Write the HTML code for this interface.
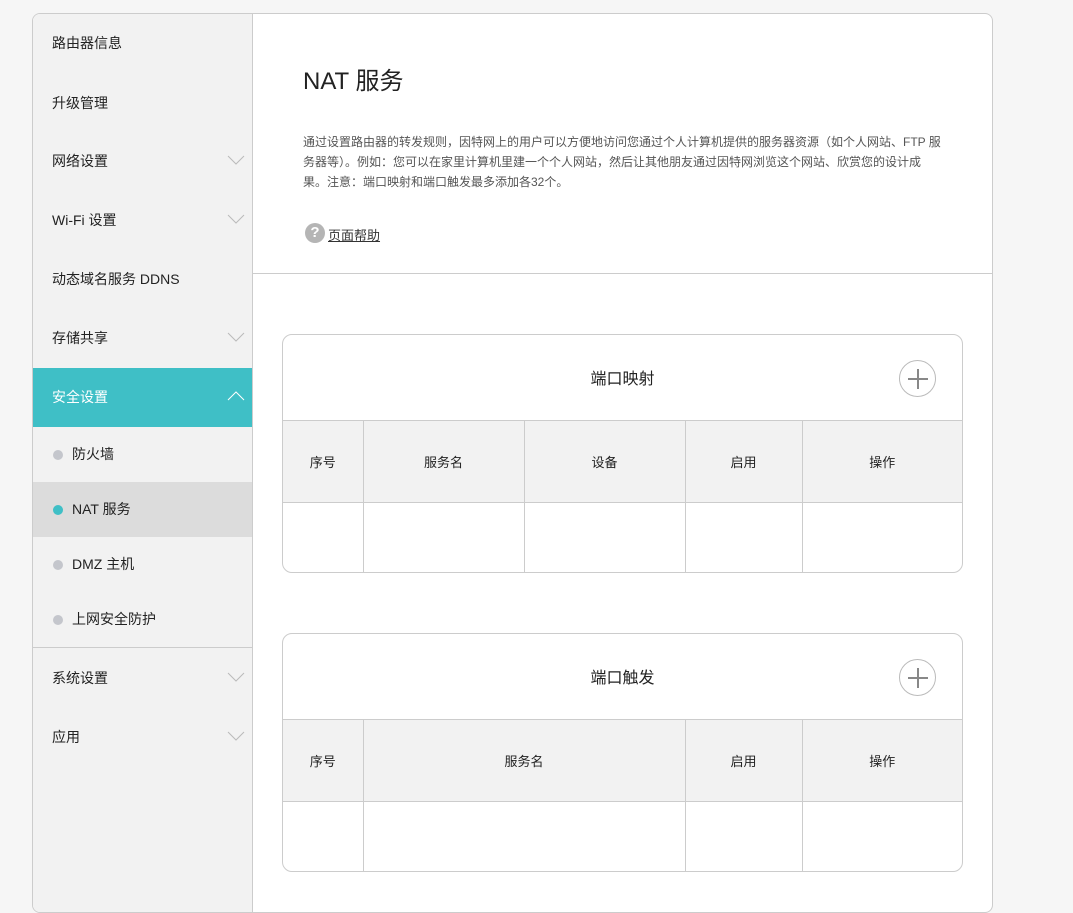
<!DOCTYPE html>
<html><head><meta charset="utf-8"><style>
*{margin:0;padding:0;box-sizing:border-box}
body{width:1073px;height:899px;background:#f6f6f6;font-family:"Liberation Sans","Noto Sans CJK SC",sans-serif;color:#222;position:relative;overflow:hidden}
.wrap{position:absolute;left:32px;top:13px;width:961px;height:900px;border:1px solid #ccc;border-radius:8px;background:#fff;overflow:hidden}
.side{position:absolute;left:0;top:0;width:220px;height:900px;background:#f2f2f2;border-right:1px solid #ccc}
.it{position:absolute;left:0;width:219px;height:59px;line-height:59px;padding-left:19px;font-size:14px;color:#222}
.it svg{position:absolute;right:7px;top:23px}
.act{background:#3fbfc6;color:#fff}
.sub{position:absolute;left:0;width:219px;height:55px;line-height:55px;padding-left:39px;font-size:14px}
.sub:before{content:"";position:absolute;left:20px;top:23px;width:10px;height:10px;border-radius:50%;background:#c4c6cc}
.sub.on{background:#dcdcdc}.sub.on:before{background:#3fbfc6}
.a{position:absolute;font-size:12px;color:#555}
.card{position:absolute;left:249px;width:681px;border:1px solid #ccc;border-radius:10px;overflow:hidden;background:#fff}
.ch{height:86px;line-height:90px;text-align:center;font-size:16px;border-bottom:1px solid #ccc;position:relative}
.plus{position:absolute;left:616px;top:25px;width:37px;height:37px;border:1px solid #bbb;border-radius:50%}
.plus:before{content:"";position:absolute;left:8px;top:17px;width:20px;height:2px;background:#888}
.plus:after{content:"";position:absolute;left:17px;top:8px;width:2px;height:20px;background:#888}
table{border-collapse:collapse;width:100%;table-layout:fixed}
td{border-right:1px solid #ccc;text-align:center;font-size:13px}
td:last-child{border-right:none}
tr.h td{height:81px;background:#f2f2f2;border-bottom:1px solid #ccc}
tr.b td{height:70px}
</style></head><body>
<div class="wrap">
<div class="side">
<div class="it" style="top:0">路由器信息</div>
<div class="it" style="top:60px">升级管理</div>
<div class="it" style="top:118px">网络设置<svg width="18" height="10"><path d="M1 1L9 9L17 1" fill="none" stroke="#bbb"/></svg></div>
<div class="it" style="top:177px">Wi-Fi 设置<svg width="18" height="10"><path d="M1 1L9 9L17 1" fill="none" stroke="#bbb"/></svg></div>
<div class="it" style="top:236px">动态域名服务 DDNS</div>
<div class="it" style="top:295px">存储共享<svg width="18" height="10"><path d="M1 1L9 9L17 1" fill="none" stroke="#bbb"/></svg></div>
<div class="it act" style="top:354px">安全设置<svg width="18" height="10"><path d="M1 9L9 1L17 9" fill="none" stroke="#fff"/></svg></div>
<div class="sub" style="top:413px">防火墙</div>
<div class="sub on" style="top:468px">NAT 服务</div>
<div class="sub" style="top:523px">DMZ 主机</div>
<div class="sub" style="top:578px">上网安全防护</div>
<div style="position:absolute;left:0;top:633px;width:219px;border-top:1px solid #ccc"></div>
<div class="it" style="top:635px">系统设置<svg width="18" height="10"><path d="M1 1L9 9L17 1" fill="none" stroke="#bbb"/></svg></div>
<div class="it" style="top:694px">应用<svg width="18" height="10"><path d="M1 1L9 9L17 1" fill="none" stroke="#bbb"/></svg></div>
</div>
<div class="a" style="left:270px;top:47px;font-size:24px;color:#222">NAT 服务</div>
<div class="a" style="left:270px;top:118px;width:640px;line-height:20px">通过设置路由器的转发规则，因特网上的用户可以方便地访问您通过个人计算机提供的服务器资源（如个人网站、FTP 服务器等）。例如：您可以在家里计算机里建一个个人网站，然后让其他朋友通过因特网浏览这个网站、欣赏您的设计成果。注意：端口映射和端口触发最多添加各32个。</div>
<div class="a" style="left:272px;top:209px;width:20px;height:20px;border-radius:50%;background:#b5b5b5;color:#fff;font-size:15px;font-weight:bold;text-align:center;line-height:20px">?</div>
<div class="a" style="left:295px;top:211px;font-size:13px;color:#333;text-decoration:underline">页面帮助</div>
<div style="position:absolute;left:220px;top:259px;width:741px;border-top:1px solid #ccc"></div>
<div class="card" style="top:320px;height:239px">
<div class="ch">端口映射<div class="plus"></div></div>
<table><colgroup><col style="width:80px"><col style="width:161px"><col style="width:161px"><col style="width:117px"><col></colgroup>
<tr class="h"><td>序号</td><td>服务名</td><td>设备</td><td>启用</td><td>操作</td></tr>
<tr class="b"><td></td><td></td><td></td><td></td><td></td></tr></table>
</div>
<div class="card" style="top:619px;height:239px">
<div class="ch">端口触发<div class="plus"></div></div>
<table><colgroup><col style="width:80px"><col style="width:322px"><col style="width:117px"><col></colgroup>
<tr class="h"><td>序号</td><td>服务名</td><td>启用</td><td>操作</td></tr>
<tr class="b"><td></td><td></td><td></td><td></td></tr></table>
</div>
</div>
</body></html>
